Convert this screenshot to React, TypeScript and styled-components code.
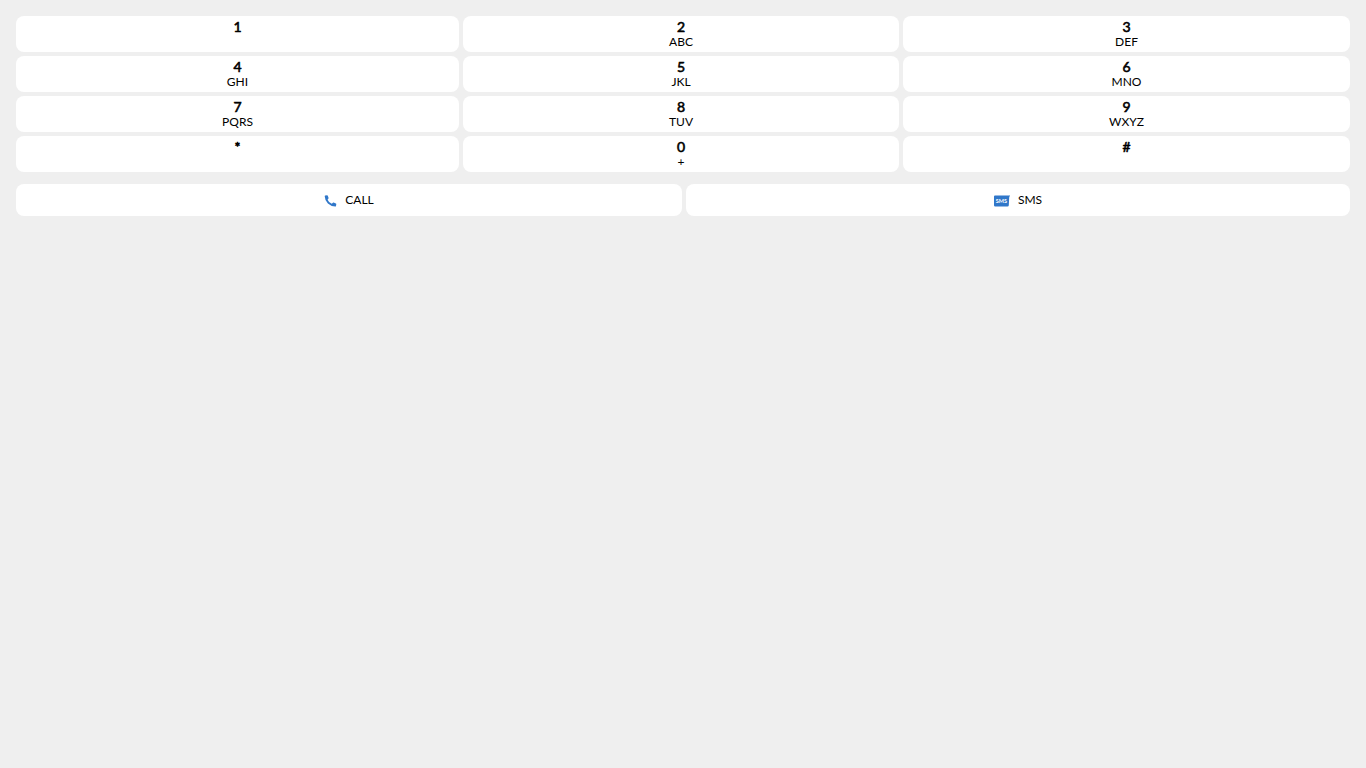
import React from "react";
import styled, { createGlobalStyle } from "styled-components";

const GlobalStyle = createGlobalStyle`
  * { box-sizing: border-box; }
  body {
    margin: 0;
    background: #efefef;
    color: #000;
    font-family: Lato, sans-serif;
    font-size: 12px;
  }
`;

const Dialer = styled.main`
  padding: 16px;
`;

const Keypad = styled.div`
  display: grid;
  grid-template-columns: 443px 436px 447px;
  grid-auto-rows: 36px;
  gap: 4px;
`;

const Key = styled.button`
  display: flex;
  flex-direction: column;
  align-items: center;
  padding: 3px 0 0;
  border: 0;
  border-radius: 8px;
  background: #fff;
  color: inherit;
  font: inherit;
`;

const Digit = styled.span`
  font-size: 14px;
  font-weight: 400;
  line-height: 16px;
  -webkit-text-stroke: 0.6px #000;
`;

const Letters = styled.span`
  font-size: 12px;
  line-height: 14px;
`;

const Actions = styled.div`
  display: grid;
  grid-template-columns: 666px 664px;
  gap: 4px;
  margin-top: 12px;
`;

const Action = styled.button`
  display: flex;
  align-items: center;
  justify-content: center;
  gap: 8px;
  height: 32px;
  padding: 0;
  border: 0;
  border-radius: 8px;
  background: #fff;
  color: inherit;
  font: inherit;
`;

const Label = styled.span`
  line-height: 14px;
`;

const Icon = styled.svg<{ $width: number }>`
  width: ${({ $width }) => $width}px;
  height: 16px;
  margin-top: 2px;
  fill: #3077c9;
`;

const keys = [
  ["1", ""], ["2", "ABC"], ["3", "DEF"],
  ["4", "GHI"], ["5", "JKL"], ["6", "MNO"],
  ["7", "PQRS"], ["8", "TUV"], ["9", "WXYZ"],
  ["*", ""], ["0", "+"], ["#", ""],
];

export default function App() {
  return (
    <Dialer>
      <GlobalStyle />
      <Keypad>
        {keys.map(([digit, letters]) => (
          <Key key={digit}>
            <Digit>{digit}</Digit>
            <Letters>{letters}</Letters>
          </Key>
        ))}
      </Keypad>
      <Actions>
        <Action>
          <Icon $width={13} viewBox="0 0 13 16">
            <path d="M1.2 2.6 3.2 2.3q.4 0 .6.4l.8 2.200q.1.4-.2.7L3.600 6.700q1.200 3 4.200 4.100l1.100-1q.3-.3.7-.2l2.300.8q.4.2.4.6l-.3 2.100q-.1.5-.7.5Q6.900 13.500 3.900 10.600T.7 3.200q0-.5.500-.6Z" />
          </Icon>
          <Label>CALL</Label>
        </Action>
        <Action>
          <Icon $width={16} viewBox="0 0 16 16">
            <path d="M1 2.500H16v.6q-.7.200-.8 1.400L14.800 12.300q-.1 1.200-1.300 1.200H1.300Q0 13.500 0 12.200V3.500q0-1 1-1Z" />
            <text x="7.300" y="10.100" textAnchor="middle" fill="#fff" fontSize="5.500" fontWeight="700">SMS</text>
          </Icon>
          <Label>SMS</Label>
        </Action>
      </Actions>
    </Dialer>
  );
}
